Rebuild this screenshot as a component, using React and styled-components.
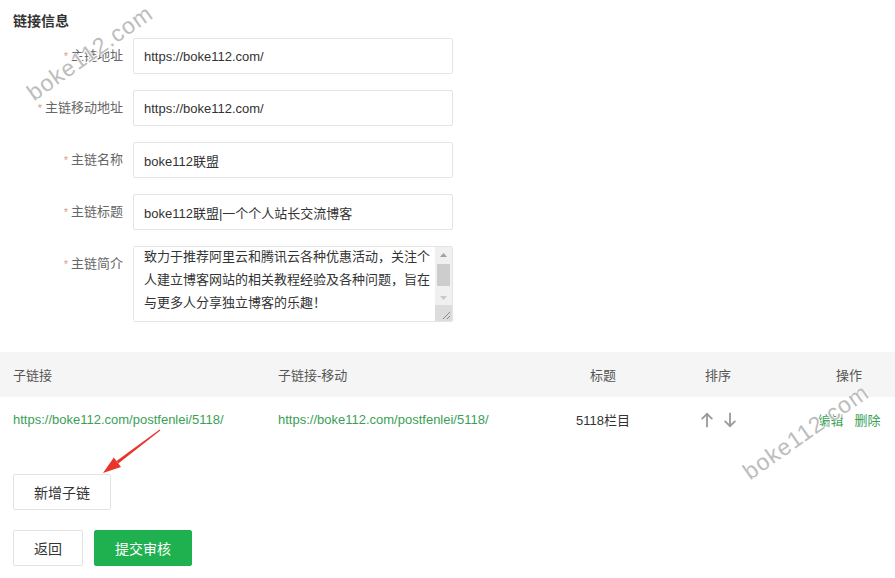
import React, { useEffect, useRef } from "react";
import styled, { createGlobalStyle } from "styled-components";

const GlobalStyle = createGlobalStyle`
  html, body {
    margin: 0;
    padding: 0;
    background: #fff;
  }
  body {
    font-family: "Liberation Sans", Arial, "Noto Sans CJK SC", sans-serif;
    color: #333;
  }
`;

const fields = [
  { label: "主链地址", value: "https://boke112.com/" },
  { label: "主链移动地址", value: "https://boke112.com/" },
  { label: "主链名称", value: "boke112联盟" },
  { label: "主链标题", value: "boke112联盟|一个个人站长交流博客" },
];

const intro =
  "致力于推荐阿里云和腾讯云各种优惠活动，关注个人建立博客网站的相关教程经验及各种问题，旨在与更多人分享独立博客的乐趣！";

const subLinks = [
  {
    url: "https://boke112.com/postfenlei/5118/",
    mobile: "https://boke112.com/postfenlei/5118/",
    title: "5118栏目",
  },
];

const SortArrow = ({ down }) => (
  <svg width="12" height="16" viewBox="0 0 12 16" fill="none">
    <g
      stroke="currentColor"
      strokeWidth="1.8"
      strokeLinecap="round"
      strokeLinejoin="round"
      transform={down ? "rotate(180 6 8)" : undefined}
    >
      <path d="M6 14.5V1.8" />
      <path d="M1.2 6.6 6 1.8l4.8 4.8" />
    </g>
  </svg>
);

const Triangle = ({ down, color }) => (
  <svg width="7" height="4" viewBox="0 0 7 4">
    <polygon points={down ? "0,0 7,0 3.5,4" : "0,4 7,4 3.5,0"} fill={color} />
  </svg>
);

const Grip = () => (
  <svg width="15" height="15" viewBox="0 0 15 15">
    <path d="M13 6 6 13M13 10 10 13" stroke="#8a8a8a" strokeWidth="1" />
  </svg>
);

const App = () => {
  const areaRef = useRef(null);

  useEffect(() => {
    if (areaRef.current) areaRef.current.scrollTop = 6;
  }, []);

  return (
    <Page>
      <GlobalStyle />
      <SectionTitle>链接信息</SectionTitle>
      <Form>
        {fields.map((f) => (
          <FormRow key={f.label}>
            <Label>
              <Star>*</Star>
              {f.label}
            </Label>
            <Input readOnly value={f.value} />
          </FormRow>
        ))}
        <FormRow>
          <Label>
            <Star>*</Star>
            主链简介
          </Label>
          <TextBox>
            <TextArea ref={areaRef} readOnly value={intro} />
            <ScrollBar>
              <ScrollButton>
                <Triangle color="#a0a0a0" />
              </ScrollButton>
              <ScrollTrack>
                <ScrollThumb />
              </ScrollTrack>
              <ScrollButton>
                <Triangle down color="#c8c8c8" />
              </ScrollButton>
              <Resizer>
                <Grip />
              </Resizer>
            </ScrollBar>
          </TextBox>
        </FormRow>
      </Form>

      <Table>
        <HeadRow>
          <Cell>子链接</Cell>
          <Cell>子链接-移动</Cell>
          <Cell $center>标题</Cell>
          <Cell $center>排序</Cell>
          <ActionCell>操作</ActionCell>
        </HeadRow>
        {subLinks.map((row) => (
          <BodyRow key={row.url}>
            <Cell>
              <Link>{row.url}</Link>
            </Cell>
            <Cell>
              <Link>{row.mobile}</Link>
            </Cell>
            <Cell $center $dark>
              {row.title}
            </Cell>
            <Cell $center>
              <SortIcons>
                <SortArrow />
                <SortArrow down />
              </SortIcons>
            </Cell>
            <ActionCell>
              <Link>编辑</Link>
              <Link>删除</Link>
            </ActionCell>
          </BodyRow>
        ))}
      </Table>

      <AddBar>
        <Button>新增子链</Button>
      </AddBar>
      <Footer>
        <Button>返回</Button>
        <Button $primary>提交审核</Button>
      </Footer>

      <Watermark style={{ left: 90, top: 53 }}>boke112.com</Watermark>
      <Watermark style={{ left: 806, top: 432 }}>boke112.com</Watermark>

      <Annotation width="895" height="578" viewBox="0 0 895 578">
        <polygon
          points="160.3,430.4 159.7,429.6 116.5,461 118.3,463.4"
          fill="#e8342b"
        />
        <polygon points="103,473 113.8,457.4 121,467" fill="#e8342b" />
      </Annotation>
    </Page>
  );
};

export default App;

const Page = styled.div`
  position: relative;
  width: 895px;
  height: 578px;
  overflow: hidden;
  background: #fff;
`;

const SectionTitle = styled.div`
  margin: 11px 0 0 13px;
  font-size: 14px;
  line-height: 20px;
  font-weight: bold;
  color: #333;
`;

const Form = styled.div`
  margin-top: 7px;
  display: flex;
  flex-direction: column;
  gap: 16px;
`;

const FormRow = styled.div`
  display: flex;
  align-items: flex-start;
`;

const Label = styled.div`
  width: 123px;
  padding-right: 10px;
  box-sizing: content-box;
  text-align: right;
  font-size: 13px;
  line-height: 36px;
  color: #666;
`;

const Star = styled.span`
  color: #e49a85;
  font-size: 11px;
  margin-right: 3px;
`;

const Input = styled.input`
  width: 320px;
  height: 36px;
  box-sizing: border-box;
  border: 1px solid #e4e4e4;
  border-radius: 2px;
  padding: 0 10px;
  font-family: inherit;
  font-size: 13px;
  color: #333;
  outline: none;
`;

const TextBox = styled.div`
  display: flex;
  width: 320px;
  height: 76px;
  box-sizing: border-box;
  border: 1px solid #e4e4e4;
  border-radius: 2px;
  overflow: hidden;
`;

const TextArea = styled.textarea`
  flex: 1;
  min-width: 0;
  height: 100%;
  box-sizing: border-box;
  border: none;
  padding: 4px 3px 12px 10px;
  font-family: inherit;
  font-size: 13px;
  line-height: 23px;
  color: #333;
  outline: none;
  resize: none;
  overflow: hidden;
`;

const ScrollBar = styled.div`
  width: 17px;
  display: flex;
  flex-direction: column;
  background: #f0f0f0;
`;

const ScrollButton = styled.div`
  height: 15px;
  display: flex;
  align-items: center;
  justify-content: center;
`;

const ScrollTrack = styled.div`
  flex: 1;
  padding: 2px 2px 0;
`;

const ScrollThumb = styled.div`
  height: 22px;
  background: #cdcdcd;
`;

const Resizer = styled.div`
  height: 16px;
  background: #dcdcdc;
  display: flex;
  align-items: flex-end;
  justify-content: flex-end;
`;

const Table = styled.div`
  margin-top: 30px;
`;

const HeadRow = styled.div`
  display: grid;
  grid-template-columns: 265px 270px 110px 120px 1fr;
  align-items: center;
  height: 45px;
  padding-left: 13px;
  background: #f5f5f5;
  font-size: 13px;
  color: #555;
`;

const BodyRow = styled(HeadRow)`
  background: #fff;
`;

const Cell = styled.div`
  display: flex;
  justify-content: ${(p) => (p.$center ? "center" : "flex-start")};
  align-items: center;
  color: ${(p) => (p.$dark ? "#333" : "inherit")};
  white-space: nowrap;
`;

const ActionCell = styled.div`
  justify-self: end;
  width: 92px;
  display: flex;
  justify-content: center;
  gap: 11px;
`;

const Link = styled.span`
  color: #3a9f55;
  cursor: pointer;
`;

const SortIcons = styled.div`
  display: flex;
  gap: 11px;
  color: #999;
`;

const AddBar = styled.div`
  margin: 32px 0 0 13px;
`;

const Footer = styled.div`
  display: flex;
  gap: 11px;
  margin: 20px 0 0 13px;
`;

const Button = styled.button`
  height: 36px;
  padding: 0 20px;
  border: 1px solid ${(p) => (p.$primary ? "#1fb150" : "#e3e3e3")};
  border-radius: 2px;
  background: ${(p) => (p.$primary ? "#1fb150" : "#fff")};
  color: ${(p) => (p.$primary ? "#fff" : "#333")};
  font-family: inherit;
  font-size: 14px;
  cursor: pointer;
`;

const Watermark = styled.span`
  position: absolute;
  transform: translate(-50%, -50%) rotate(-35deg);
  font-family: "Liberation Sans", Arial, sans-serif;
  font-size: 23px;
  color: #bdbdbd;
  letter-spacing: 1px;
  white-space: nowrap;
  pointer-events: none;
  text-shadow: 0 0 1px #fff, 1px 1px 0 #fff, -1px -1px 0 #fff;
`;

const Annotation = styled.svg`
  position: absolute;
  left: 0;
  top: 0;
  pointer-events: none;
`;
